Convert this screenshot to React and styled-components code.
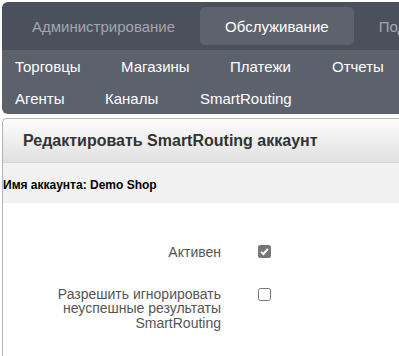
import styled, { createGlobalStyle } from "styled-components"

const GlobalStyle = createGlobalStyle`
  html, body {
    overflow: hidden;
  }
  body {
    margin: 0;
    padding: 2px 0 0 2px;
    background: #fff;
    font-family: "Liberation Sans", Arial, sans-serif;
  }
`

const Nav = styled.nav`
  border-radius: 6px 0 0 6px;
  overflow: hidden;
`

const TopBar = styled.div`
  background: #4b515c;
  height: 48px;
  display: flex;
  align-items: center;
  padding-left: 5px;
  white-space: nowrap;
`

const Tab = styled.div`
  height: 38px;
  display: flex;
  align-items: center;
  padding: 0 25px;
  border-radius: 5px;
  font-size: 15px;
  color: ${p => (p.$active ? "#ffffff" : "#a3a7ad")};
  background: ${p => (p.$active ? "#5c636d" : "transparent")};
`

const SubBar = styled.div`
  background: #5c626c;
  padding-left: 13px;
  height: 64px;
`

const SubRow = styled.div`
  display: flex;
  height: 32px;
  align-items: center;
  white-space: nowrap;
`

const SubItem = styled.span`
  font-size: 15px;
  color: #ffffff;
  width: ${p => p.$w}px;
  flex-shrink: 0;
`

const Panel = styled.section`
  margin-top: 4px;
  border: 1px solid #b3b3b3;
  border-right: none;
  border-bottom: none;
  border-radius: 5px 0 0 0;
  height: 237px;
`

const PanelHeader = styled.div`
  height: 43px;
  display: flex;
  align-items: center;
  padding-left: 20px;
  background: linear-gradient(#fdfdfd, #e0e0e0);
  border-bottom: 1px solid #d6d6d6;
  border-radius: 5px 0 0 0;
  font-size: 16px;
  font-weight: bold;
  color: #333333;
`

const InfoBar = styled.div`
  background: #f1f1f1;
  height: 40px;
  display: flex;
  align-items: center;
  padding-top: 4px;
  box-sizing: border-box;
  font-size: 12px;
  font-weight: bold;
  color: #000;
`

const Form = styled.div`
  padding-top: 42px;
  display: flex;
  flex-direction: column;
  gap: 27px;
`

const Row = styled.div`
  display: grid;
  grid-template-columns: 218px 13px;
  column-gap: 37px;
  align-items: start;
`

const Label = styled.label`
  text-align: right;
  font-size: 14px;
  line-height: 14.5px;
  color: #555;
  padding-left: 50px;
`

const Box = styled.span`
  width: 13px;
  height: 13px;
  border-radius: 2.5px;
  box-sizing: border-box;
  display: flex;
  align-items: center;
  justify-content: center;
  margin-top: ${p => p.$top || 0}px;
  border: ${p => (p.$checked ? "none" : "1px solid #767676")};
  background: ${p => (p.$checked ? "#767676" : "#fff")};
`

function Check({ checked, top }) {
  return (
    <Box $checked={checked} $top={top}>
      {checked && (
        <svg width="11" height="11" viewBox="0 0 11 11">
          <path d="M2 5.8 L4.4 8 L9 2.8" stroke="#fff" strokeWidth="2" fill="none" />
        </svg>
      )}
    </Box>
  )
}

export default function App() {
  return (
    <>
      <GlobalStyle />
      <Nav>
        <TopBar>
          <Tab>Администрирование</Tab>
          <Tab $active>Обслуживание</Tab>
          <Tab>Подписки</Tab>
        </TopBar>
        <SubBar>
          <SubRow>
            <SubItem $w={106}>Торговцы</SubItem>
            <SubItem $w={109}>Магазины</SubItem>
            <SubItem $w={102}>Платежи</SubItem>
            <SubItem $w={80}>Отчеты</SubItem>
          </SubRow>
          <SubRow>
            <SubItem $w={90}>Агенты</SubItem>
            <SubItem $w={95}>Каналы</SubItem>
            <SubItem $w={120}>SmartRouting</SubItem>
          </SubRow>
        </SubBar>
      </Nav>
      <Panel>
        <PanelHeader>Редактировать SmartRouting аккаунт</PanelHeader>
        <InfoBar>Имя аккаунта: Demo Shop</InfoBar>
        <Form>
          <Row>
            <Label>Активен</Label>
            <Check checked top={0} />
          </Row>
          <Row>
            <Label>Разрешить игнорировать неуспешные результаты SmartRouting</Label>
            <Check top={1} />
          </Row>
        </Form>
      </Panel>
    </>
  )
}
